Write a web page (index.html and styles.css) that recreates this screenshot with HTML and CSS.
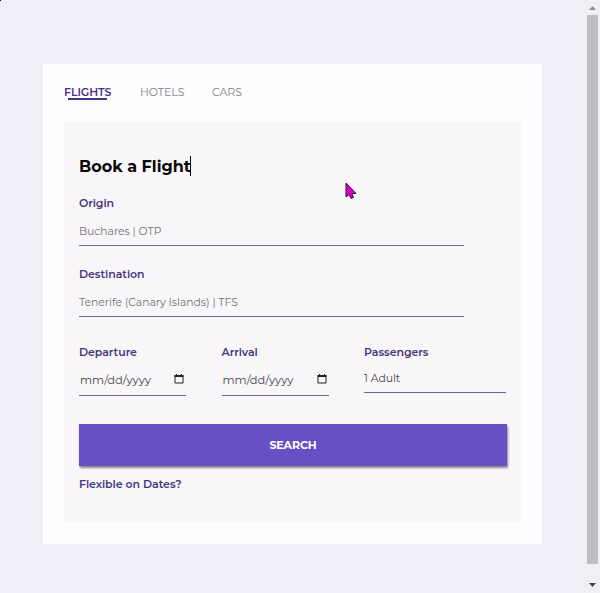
FILE: index.html
```html
<!DOCTYPE html>
<html lang="en">
<head>
<meta charset="utf-8">
<title>Book a Flight</title>
<link rel="stylesheet" href="styles.css">
</head>
<body>
<div class="page">
  <main class="card">
    <nav class="tabs">
      <a class="tab active">FLIGHTS</a>
      <a class="tab hotels">HOTELS</a>
      <a class="tab cars">CARS</a>
    </nav>
    <form class="panel">
      <h1><span class="title">Book a Flight</span><i class="caret"></i></h1>
      <div class="field wide">
        <label>Origin</label>
        <div class="value muted"><span class="otp">Buchares | OTP</span></div>
      </div>
      <div class="field wide second">
        <label>Destination</label>
        <div class="value muted"><span class="tfs">Tenerife (Canary Islands) | TFS</span></div>
      </div>
      <div class="row">
        <div class="field">
          <label>Departure</label>
          <div class="value date"><span class="mdy">mm/dd/yyyy</span>
            <svg width="10" height="10" viewBox="0 0 10 10"><path d="M1 1.5H9V9H1Z" fill="none" stroke="#222"/><path d="M.5 1H9.500V3H.5ZM2 0H3V1H2ZM7 0H8V1H7Z" fill="#222"/></svg>
          </div>
        </div>
        <div class="field">
          <label>Arrival</label>
          <div class="value date"><span class="mdy">mm/dd/yyyy</span>
            <svg width="10" height="10" viewBox="0 0 10 10"><path d="M1 1.500H9V9H1Z" fill="none" stroke="#222"/><path d="M.5 1H9.500V3H.5ZM2 0H3V1H2ZM7 0H8V1H7Z" fill="#222"/></svg>
          </div>
        </div>
        <div class="field">
          <label>Passengers</label>
          <div class="value people"><span class="adult">1 Adult</span></div>
        </div>
      </div>
      <button type="button"><span>SEARCH</span></button>
      <a class="flexible">Flexible on Dates?</a>
    </form>
  </main>
</div>
<aside class="scrollbar">
  <svg width="7" height="4" viewBox="0 0 7 4"><path d="M0 4L3.500 0L7 4Z" fill="#929194"/></svg>
  <div class="thumb"></div>
  <svg width="7" height="4" viewBox="0 0 7 4"><path d="M0 0L3.500 4L7 0Z" fill="#444"/></svg>
</aside>
<svg class="pointer" width="12" height="18" viewBox="0 0 12 18"><path d="M1 1V15L4 12.500L6 16.500L8.500 15.500L6.900 11.500H11Z" fill="#d800c8" stroke="#35102f"/></svg>
<i class="dot"></i>
</body>
</html>
```
FILE: styles.css
```css
* { box-sizing: border-box; }
body {
  margin: 0;
  width: 600px;
  height: 593px;
  display: flex;
  overflow: hidden;
  background: #f0eef6;
  font-family: Montserrat, Inter, sans-serif;
  font-size: 11px;
  line-height: 14px;
}
span, label, a { white-space: nowrap; }
.page { width: 586px; padding: 64px 0 0 43px; }
.card { width: 499px; height: 480px; padding: 21px 21px 0; background: #fefdff; }
.tabs { display: flex; height: 37px; }
.tab { height: 15px; color: #858388; letter-spacing: -.1px; }
.tab.active { width: 76px; font-weight: 600; color: #45348a; }
.tab.active::after { content: ""; display: block; width: 39px; height: 2px; margin: -1px 0 0 4px; background: #45348a; }
.hotels { width: 72px; }
.panel { height: 400px; width: 457px; padding: 32px 15px 0; background: #f8f6f8; }
h1 { display: flex; align-items: center; height: 24px; margin: 0 0 18px; font-size: 16px; font-weight: 700; line-height: 24px; color: #080808; }
.title { width: 111px; padding-top: 1px; }
.caret { width: 1px; height: 20px; background: #000; }
label { display: block; height: 14px; font-weight: 600; color: #45397f; letter-spacing: -.05px; }
.value { display: flex; border-bottom: 1px solid #6e62aa; color: #48464b; }
.muted { color: #767479; font-size: 10.8px; letter-spacing: -.03px; }
.wide { width: 385px; }
.wide .value { height: 36px; padding-top: 15px; }
.second { margin-top: 21px; }
.row { display: grid; grid-template-columns: 107px 107px 142px; column-gap: 35.500px; margin-top: 28px; }
.date { height: 37px; padding: 14px 2px 0 1px; justify-content: space-between; font-size: 11.4px; }
.date svg { margin-top: 1px; }
.people { height: 34px; padding-top: 13px; font-size: 10.800px; }
button { display: block; width: 428px; height: 42px; margin: 28px 0 11px; border: 0; padding: 0; background: #674fc5; color: #fff; box-shadow: 1px 2px 2px #85828b; font: 700 11px/14px Montserrat, Inter, sans-serif; letter-spacing: -.1px; }
.flexible { display: block; font-weight: 600; color: #45397f; letter-spacing: -.05px; }
.scrollbar { width: 14px; height: 593px; padding: 6px 2px 0 0; display: flex; flex-direction: column; align-items: center; background: #f1eff3; }
.scrollbar svg { flex: none; }
.thumb { width: 11px; height: 549px; margin: 5px 0 19px; background: #bfbdc0; }
.pointer { position: absolute; left: 345px; top: 182px; }
.dot { position: absolute; left: 0; top: 0; width: 1px; height: 1px; background: #111; }
```
